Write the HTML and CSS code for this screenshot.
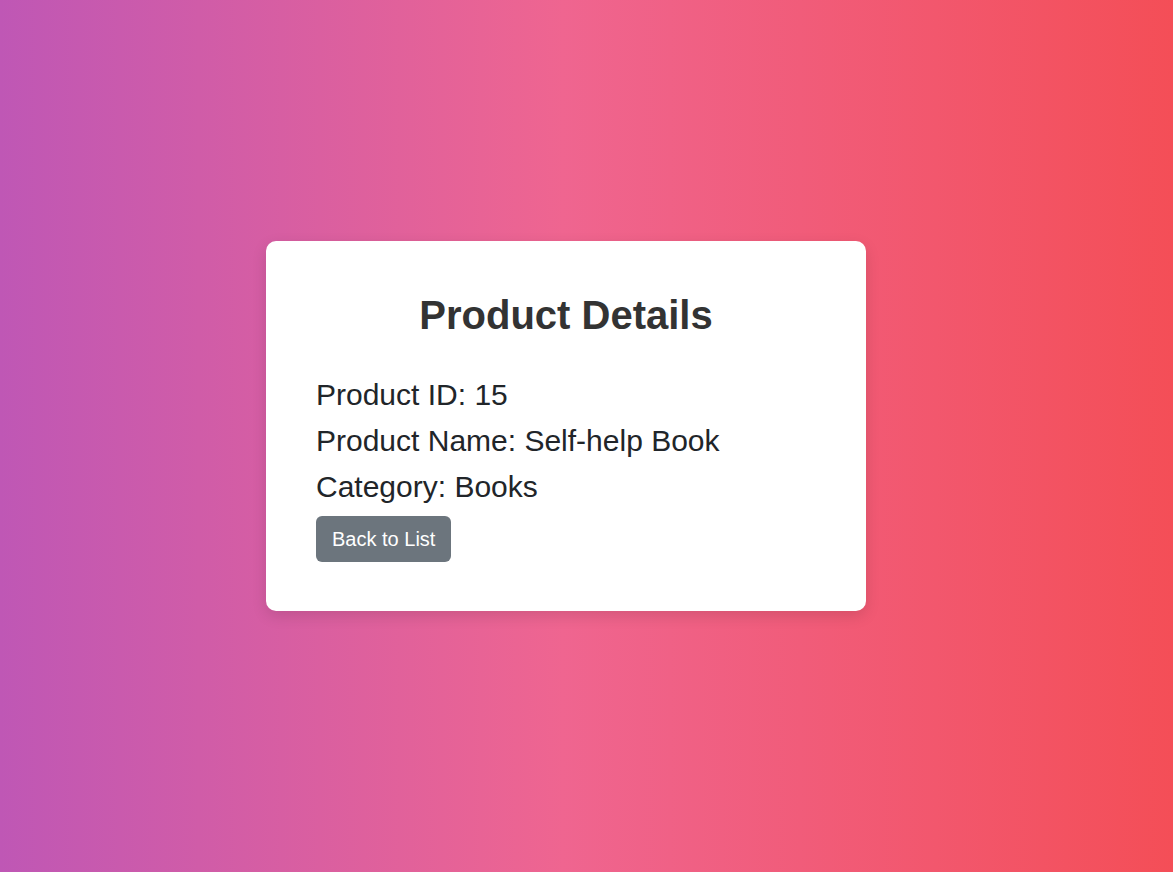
FILE: index.html
```html
<!DOCTYPE html>
<html lang="en">
<head>
<meta charset="utf-8">
<title>Product Details</title>
<link rel="stylesheet" href="styles.css">
</head>
<body>
<main class="page">
  <section class="card">
    <h1 class="card-title">Product Details</h1>
    <p class="detail">Product ID: 15</p>
    <p class="detail">Product Name: Self-help Book</p>
    <p class="detail">Category: Books</p>
    <button class="btn-back" type="button">Back to List</button>
  </section>
</main>
</body>
</html>
```

FILE: styles.css
```css
html, body {
  margin: 0;
  padding: 0;
}

body {
  font-family: "Liberation Sans", Arial, sans-serif;
  background: linear-gradient(to right, #bf57b5 0%, #ef6590 48%, #f44e57 100%);
  min-height: 872px;
}

.page {
  box-sizing: border-box;
  height: 872px;
  display: flex;
  align-items: center;
  justify-content: center;
  padding: 0 41px 20px 0;
}

.card {
  box-sizing: border-box;
  width: 600px;
  height: 370px;
  background: #ffffff;
  border-radius: 10px;
  padding: 51px 50px 50px;
  box-shadow: 0 5px 15px rgba(0, 0, 0, 0.12);
}

.card-title {
  margin: 0 0 40px;
  font-size: 40px;
  line-height: 46px;
  font-weight: bold;
  text-align: center;
  color: #333333;
}

.detail {
  margin: 0 0 11.5px;
  font-size: 30px;
  line-height: 34.5px;
  color: #212529;
}

.btn-back {
  display: block;
  height: 46px;
  padding: 0 16px;
  border: none;
  border-radius: 6px;
  background: #6c757d;
  color: #ffffff;
  font-family: "Liberation Sans", Arial, sans-serif;
  font-size: 20px;
  line-height: 23px;
  cursor: pointer;
}
```
